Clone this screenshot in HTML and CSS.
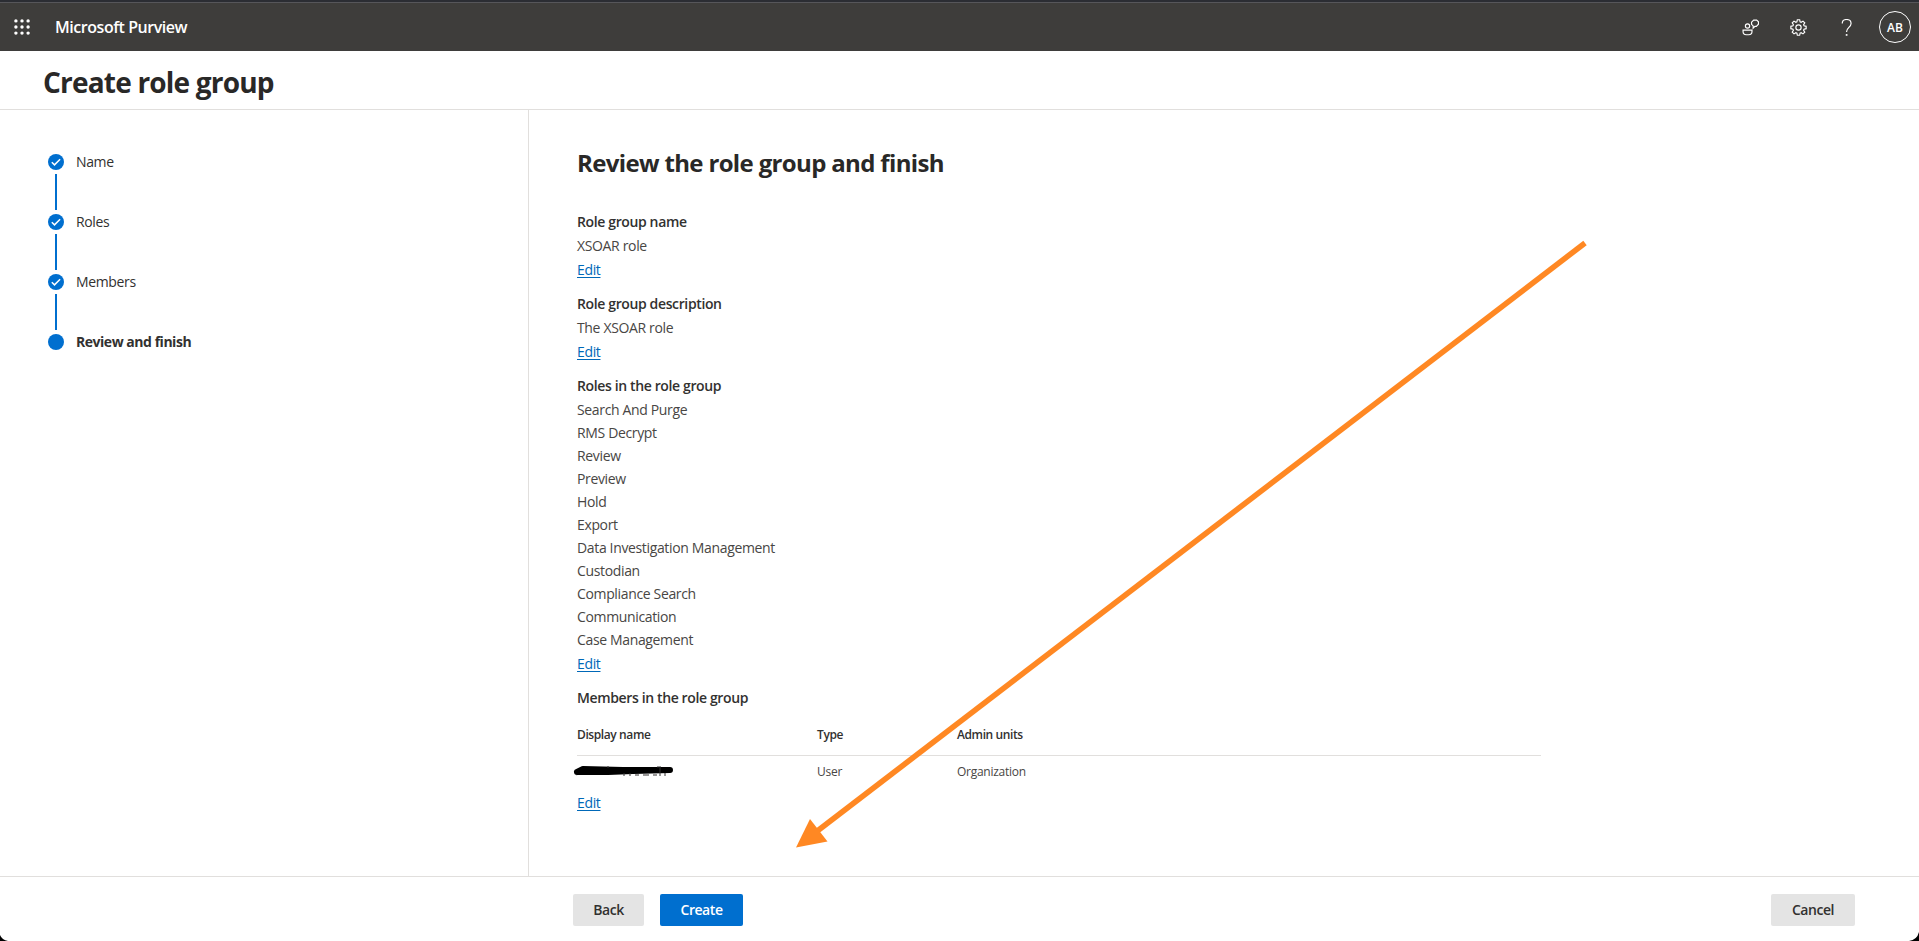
FILE: index.html
```html
<!DOCTYPE html>
<html lang="en">
<head>
<meta charset="utf-8">
<title>Microsoft Purview</title>
<link rel="stylesheet" href="styles.css">
</head>
<body>
<header class="topbar">
  <svg class="waffle" viewBox="0 0 16 16"><g fill="#fff"><circle cx="1.9" cy="1.9" r="1.7"/><circle cx="8" cy="1.9" r="1.7"/><circle cx="14.1" cy="1.9" r="1.7"/><circle cx="1.9" cy="8" r="1.7"/><circle cx="8" cy="8" r="1.7"/><circle cx="14.1" cy="8" r="1.7"/><circle cx="1.9" cy="14.1" r="1.7"/><circle cx="8" cy="14.1" r="1.7"/><circle cx="14.1" cy="14.1" r="1.7"/></g></svg>
  <span class="brand">Microsoft Purview</span>
  <nav class="tools">
    <svg class="tool" viewBox="0 0 16 16"><circle cx="5.200" cy="6.600" r="2"/><path d="M1 10.500h8.400v1.300a3 3 0 0 1-3 3H4a3 3 0 0 1-3-3z"/><path d="M9 5V3l2-2h2.800l1.700 1.700v2.200l-2 2h-1.300l-1.700 1.600V6.500z"/></svg>
    <svg class="tool" viewBox="0 0 16 16"><circle cx="8" cy="8" r="2.500"/><path d="M6.900.7h2.200l.4 2 1 .4 1.700-1.100 1.700 1.700-1.100 1.700.4 1 2 .5v2.200l-2 .5-.4 1 1.100 1.700-1.700 1.700-1.700-1.100-1 .4-.4 2H6.900l-.4-2-1-.4L3.800 14l-1.700-1.700 1.100-1.700-.4-1-2-.5V6.900l2-.5.4-1-1.100-1.700L3.800 2l1.700 1.100 1-.4z"/></svg>
    <svg class="tool" viewBox="0 0 16 16"><path d="M4 4.300C4 2 5.600.5 8 .5s4.300 1.500 4.300 3.700c0 3.400-4.200 4-4.200 7.600v.500"/><path d="M8.100 14.200v1.600" stroke-width="1.600"/></svg>
  </nav>
  <span class="avatar">AB</span>
</header>
<div class="titlebar"><h1>Create role group</h1></div>
<main class="body">
  <ol class="steps">
    <li class="step"><svg viewBox="0 0 16 16"><circle cx="8" cy="8" r="8"/><path d="M3.800 8.300l2.700 2.600 5.600-5.600"/></svg><span>Name</span></li>
    <li class="step"><svg viewBox="0 0 16 16"><circle cx="8" cy="8" r="8"/><path d="M3.800 8.300l2.700 2.600 5.600-5.600"/></svg><span>Roles</span></li>
    <li class="step"><svg viewBox="0 0 16 16"><circle cx="8" cy="8" r="8"/><path d="M3.800 8.300l2.700 2.600 5.600-5.600"/></svg><span>Members</span></li>
    <li class="step current"><svg viewBox="0 0 16 16"><circle cx="8" cy="8" r="8"/></svg><span>Review and finish</span></li>
  </ol>
  <section class="review">
    <h2>Review the role group and finish</h2>
    <div class="group"><h3>Role group name</h3><div>XSOAR role</div><a href="#">Edit</a></div>
    <div class="group"><h3>Role group description</h3><div>The XSOAR role</div><a href="#">Edit</a></div>
    <div class="group"><h3>Roles in the role group</h3>
      <ul><li>Search And Purge</li><li>RMS Decrypt</li><li>Review</li><li>Preview</li><li>Hold</li><li>Export</li><li>Data Investigation Management</li><li>Custodian</li><li>Compliance Search</li><li>Communication</li><li>Case Management</li></ul>
      <a href="#">Edit</a></div>
    <h3>Members in the role group</h3>
    <div class="table">
      <div class="row head"><span>Display name</span><span>Type</span><span>Admin units</span></div>
      <div class="row"><span><svg class="redaction" viewBox="0 0 102 20"><path d="M4 12L10 9 50 10 60 10 97 10M4 12L35 12 60 11 97 10"/><path class="ticks" d="M35 6v2M51 13v3M57 13v3M62 15h4M70 15h6M80 15h4M85 6v2M87 6v10M92 13v3"/></svg></span><span>User</span><span>Organization</span></div>
    </div>
    <a href="#">Edit</a>
  </section>
</main>
<footer class="footer"><button>Back</button><button class="primary">Create</button><button class="cancel">Cancel</button></footer>
<svg class="arrow" viewBox="0 0 1919 941"><path d="M1585 243L816 832" stroke="#ff8823" stroke-width="5.600"/><path d="M796 847.500L810 819 827.500 841.500z" fill="#ff8823"/></svg>
<svg class="corner left" viewBox="0 0 8 6"><path d="M0 0Q2 5 8 6H0z"/></svg>
<svg class="corner right" viewBox="0 0 10 10"><path d="M10 1Q8 9 0 10H10z"/></svg>
</body>
</html>
```
FILE: styles.css
```css
* { box-sizing: border-box; }
body { margin: 0; width: 1919px; height: 941px; overflow: hidden; display: flex; flex-direction: column; background: #fff; color: #323130; font: 14px/23px "Open Sans", "Noto Sans", sans-serif; letter-spacing: -0.35px; }
h1, h2, h3, ul, ol { margin: 0; padding: 0; list-style: none; }
.topbar { height: 51px; flex: none; display: flex; align-items: center; padding: 1px 8px 0 14px; background: #3e3d3b; border-top: 2px solid #2b2d33; box-shadow: inset 0 1px #56565a; color: #fff; }
.waffle { width: 16px; height: 16px; }
.brand { margin-left: 25px; padding-top: 1px; font-size: 16px; font-weight: 600; letter-spacing: -0.45px; }
.tools { margin-left: auto; display: flex; gap: 31px; }
.tool { width: 17px; height: 17px; fill: none; stroke: #fff; stroke-width: 1.1; }
.avatar { margin-left: 24px; width: 32px; height: 32px; border: 1px solid #fff; border-radius: 50%; text-align: center; line-height: 31px; font-size: 12px; font-weight: 600; letter-spacing: 0; }
.titlebar { height: 59px; flex: none; border-bottom: 1px solid #e1dfdd; padding: 13px 0 0 43px; }
h1 { font-size: 28px; line-height: 36px; font-weight: 700; letter-spacing: -0.8px; color: #292827; }
.body { flex: 1; display: flex; min-height: 0; }
.steps { width: 529px; border-right: 1px solid #e1dfdd; padding: 44px 0 0 48px; }
.step { display: flex; gap: 12px; height: 60px; line-height: 16px; position: relative; }
.step svg { width: 16px; height: 16px; fill: #006fcf; overflow: visible; }
.step path { fill: none; stroke: #fff; stroke-width: 1.5; }
.step:not(.current)::after { content: ""; position: absolute; left: 7px; top: 20px; width: 2px; height: 36px; background: #006fcf; }
.current { font-weight: 700; letter-spacing: -0.47px; }
.review { width: 1012px; padding: 37px 0 0 48px; }
h2 { font-size: 24px; line-height: 32px; margin-bottom: 31px; letter-spacing: -0.65px; color: #292827; }
h3 { font-size: inherit; font-weight: 600; letter-spacing: -0.37px; }
.group { display: flex; flex-direction: column; align-items: flex-start; gap: 1px; margin-bottom: 11px; color: #484644; }
.group h3 { color: #323130; }
a { color: #0068b8; text-decoration: underline; text-underline-offset: 2px; }
.table { margin-bottom: 3px; font-size: 12px; letter-spacing: -0.27px; }
.row { display: grid; grid-template-columns: 240px 140px 1fr; height: 32px; line-height: 31px; color: #484644; }
.row.head { height: 47px; line-height: 51px; font-weight: 600; letter-spacing: -0.4px; border-bottom: 1px solid #e1dfdd; color: #323130; }
.redaction { display: block; width: 102px; height: 20px; margin: 4px 0 0 -4px; fill: none; stroke: #000; stroke-width: 6; stroke-linecap: round; stroke-linejoin: round; }
.redaction .ticks { stroke: #323130; stroke-width: 1; stroke-linecap: butt; }
.footer { height: 65px; flex: none; border-top: 1px solid #e1dfdd; display: flex; gap: 16px; padding: 17px 64px 0 573px; }
button { height: 32px; width: 71px; border: 0; border-radius: 2px; background: #e4e4e4; color: #323130; font: 600 14px "Open Sans", sans-serif; letter-spacing: -0.45px; padding: 0 0 1px; }
.primary { width: 83px; background: #006fcf; color: #fff; }
.cancel { width: 84px; margin-left: auto; }
.arrow { position: absolute; left: 0; top: 0; width: 1919px; height: 941px; pointer-events: none; }
.corner { position: absolute; bottom: 0; width: 8px; height: 6px; }
.left { left: 0; }
.right { right: 0; width: 10px; height: 10px; }
```
